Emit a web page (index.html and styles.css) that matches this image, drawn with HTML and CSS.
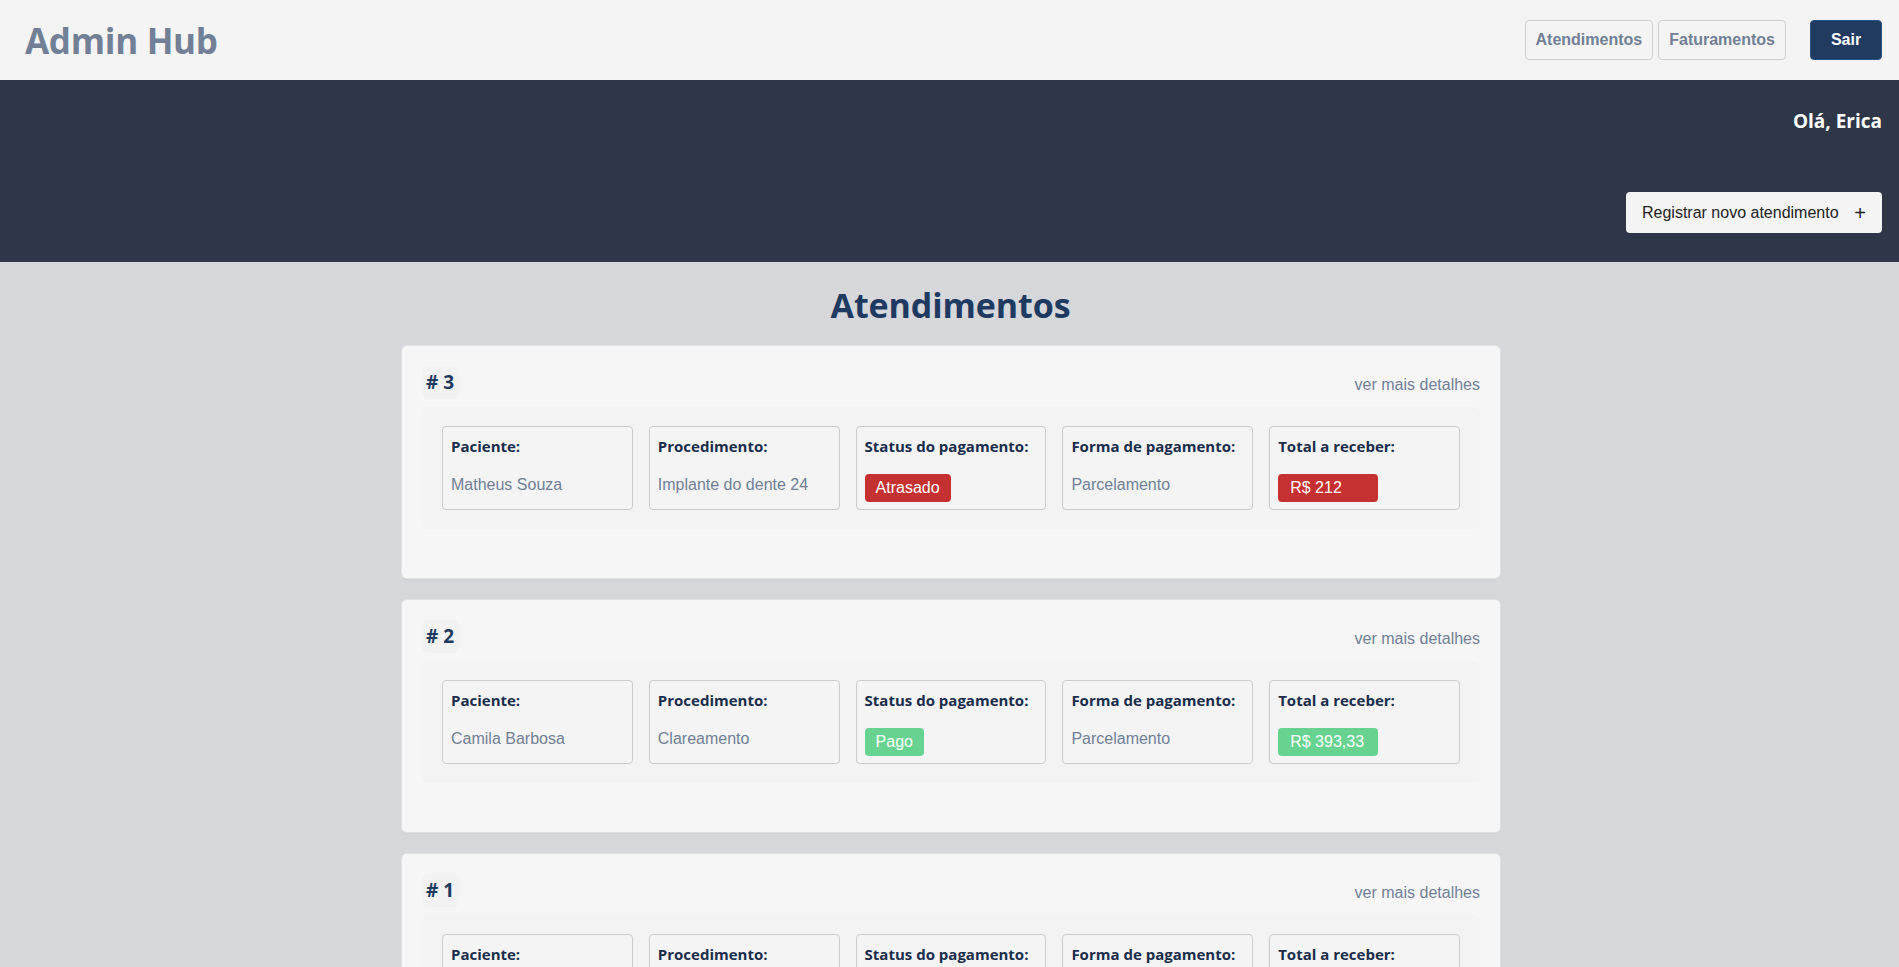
FILE: index.html
```html
<!DOCTYPE html>
<html lang="pt-BR">
<head>
<meta charset="utf-8">
<title>Admin Hub</title>
<link rel="stylesheet" href="styles.css">
</head>
<body>
<header class="topbar">
  <h1 class="brand">Admin Hub</h1>
  <nav class="nav">
    <button class="nav-btn">Atendimentos</button>
    <button class="nav-btn">Faturamentos</button>
    <button class="logout-btn">Sair</button>
  </nav>
</header>

<section class="banner">
  <p class="greeting">Olá, Erica</p>
  <button class="register-btn">Registrar novo atendimento <span class="plus">+</span></button>
</section>

<main class="main">
  <h2 class="page-title">Atendimentos</h2>

  <article class="card">
    <div class="card-head">
      <span class="card-num"># 3</span>
      <a class="details-link">ver mais detalhes</a>
    </div>
    <div class="fields">
      <div class="field"><span class="label">Paciente:</span><span class="value">Matheus Souza</span></div>
      <div class="field"><span class="label">Procedimento:</span><span class="value">Implante do dente 24</span></div>
      <div class="field"><span class="label">Status do pagamento:</span><span><span class="badge badge-red">Atrasado</span></span></div>
      <div class="field"><span class="label">Forma de pagamento:</span><span class="value">Parcelamento</span></div>
      <div class="field"><span class="label">Total a receber:</span><span><span class="badge badge-total badge-red">R$ 212</span></span></div>
    </div>
  </article>

  <article class="card">
    <div class="card-head">
      <span class="card-num"># 2</span>
      <a class="details-link">ver mais detalhes</a>
    </div>
    <div class="fields">
      <div class="field"><span class="label">Paciente:</span><span class="value">Camila Barbosa</span></div>
      <div class="field"><span class="label">Procedimento:</span><span class="value">Clareamento</span></div>
      <div class="field"><span class="label">Status do pagamento:</span><span><span class="badge badge-green">Pago</span></span></div>
      <div class="field"><span class="label">Forma de pagamento:</span><span class="value">Parcelamento</span></div>
      <div class="field"><span class="label">Total a receber:</span><span><span class="badge badge-total badge-green">R$ 393,33</span></span></div>
    </div>
  </article>

  <article class="card">
    <div class="card-head">
      <span class="card-num"># 1</span>
      <a class="details-link">ver mais detalhes</a>
    </div>
    <div class="fields">
      <div class="field"><span class="label">Paciente:</span><span class="value">Lucas Almeida</span></div>
      <div class="field"><span class="label">Procedimento:</span><span class="value">Limpeza</span></div>
      <div class="field"><span class="label">Status do pagamento:</span><span><span class="badge badge-green">Pago</span></span></div>
      <div class="field"><span class="label">Forma de pagamento:</span><span class="value">À vista</span></div>
      <div class="field"><span class="label">Total a receber:</span><span><span class="badge badge-total badge-green">R$ 150</span></span></div>
    </div>
  </article>
</main>
</body>
</html>
```

FILE: styles.css
```css
html, body {
  margin: 0;
  padding: 0;
}
html {
  overflow: hidden;
}
body {
  background: #d6d7db;
  font-family: "Liberation Sans", Arial, sans-serif;
  font-size: 16px;
}

.topbar {
  height: 80px;
  background: #f4f4f4;
  display: flex;
  align-items: center;
  justify-content: space-between;
  padding: 0 17px 0 25px;
  box-sizing: border-box;
}
.brand {
  margin: 0;
  font-family: "Open Sans", sans-serif;
  font-weight: 700;
  font-size: 35px;
  letter-spacing: -0.3px;
  color: #718096;
  line-height: 1;
}
.nav {
  display: flex;
  align-items: center;
}
.nav-btn {
  height: 40px;
  padding: 0 10px;
  margin-right: 5px;
  background: #f4f4f4;
  border: 1px solid #cdcdcd;
  border-radius: 4px;
  color: #718096;
  font-family: "Liberation Sans", Arial, sans-serif;
  font-weight: 700;
  font-size: 16px;
}
.logout-btn {
  height: 40px;
  width: 72px;
  margin-left: 19px;
  background: #213a5f;
  border: 1px solid #2c5282;
  border-radius: 4px;
  color: #fff;
  font-family: "Liberation Sans", Arial, sans-serif;
  font-weight: 700;
  font-size: 16px;
}

.banner {
  height: 182px;
  background: #2d3748;
  display: flex;
  flex-direction: column;
  align-items: flex-end;
  padding: 0 17px;
  box-sizing: border-box;
}
.greeting {
  margin: 29px 0 0;
  font-family: "Open Sans", sans-serif;
  font-weight: 700;
  font-size: 19px;
  line-height: 24px;
  color: #fff;
}
.register-btn {
  margin-top: 59px;
  width: 256px;
  height: 41px;
  padding: 0 16px;
  display: flex;
  align-items: center;
  justify-content: space-between;
  background: #f4f4f4;
  border: none;
  border-radius: 4px;
  color: #222;
  font-family: "Liberation Sans", Arial, sans-serif;
  font-size: 16px;
}
.plus {
  font-size: 20px;
  line-height: 1;
}

.main {
  padding: 21px 0 40px;
  display: flex;
  flex-direction: column;
  align-items: center;
}
.page-title {
  margin: 0 0 19px;
  height: 44px;
  line-height: 44px;
  font-family: "Open Sans", sans-serif;
  font-weight: 700;
  font-size: 34px;
  letter-spacing: -0.1px;
  color: #1f3a60;
  position: relative;
  left: 1px;
}

.card {
  width: 1098px;
  margin-left: 3px;
  margin-bottom: 22px;
  box-sizing: border-box;
  padding: 20px 20px 49px;
  background: #f6f6f6;
  border-radius: 5px;
  box-shadow: 0 0 0 1px #e2e2e4, 0 1px 2px rgba(0, 0, 0, 0.08);
}
.card-head {
  display: flex;
  align-items: center;
  justify-content: space-between;
  height: 33px;
  margin-bottom: 8px;
}
.card-num {
  padding: 4px 5px 4px 4px;
  background: #f2f2f2;
  border-radius: 6px;
  font-family: "Open Sans", sans-serif;
  font-weight: 700;
  font-size: 19px;
  line-height: 25px;
  color: #1f3a60;
}
.details-link {
  color: #718096;
  font-size: 16px;
  margin-top: 5px;
}

.fields {
  display: flex;
  gap: 16px;
  padding: 19px 20px;
  background: #f3f3f3;
  border-radius: 6px;
}
.field {
  flex: 1;
  display: flex;
  flex-direction: column;
  align-items: flex-start;
  padding: 9px 8px 7px;
  background: #f4f4f4;
  border: 1px solid #cccccc;
  border-radius: 4px;
}
.label {
  font-family: "Open Sans", sans-serif;
  font-weight: 700;
  font-size: 15px;
  line-height: 20px;
  color: #1a2d4b;
  margin-bottom: 18px;
}
.value {
  line-height: 20px;
  color: #718096;
  position: relative;
  top: 1px;
}
.badge {
  display: inline-block;
  height: 28px;
  line-height: 28px;
  padding: 0 11px;
  border-radius: 4px;
  color: #fff;
  font-size: 16px;
}
.badge-total {
  width: 100px;
  box-sizing: border-box;
  padding: 0 12px;
}
.badge-red {
  background: #c53030;
}
.badge-green {
  background: #68d391;
}
```
